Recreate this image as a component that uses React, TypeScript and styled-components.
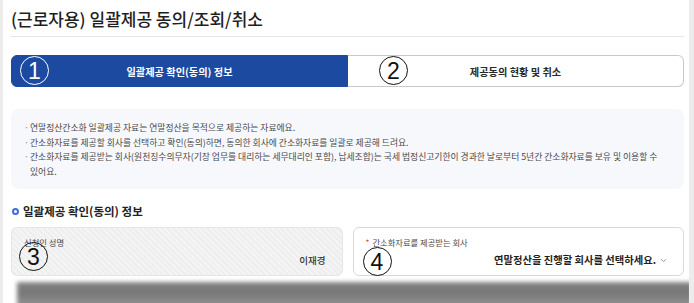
import React from 'react'
import styled, { createGlobalStyle } from 'styled-components'

const GlobalStyle = createGlobalStyle`
  html, body {
    margin: 0;
    padding: 0;
    background: #ececec;
  }
  body {
    font-family: 'Noto Sans CJK KR', 'Noto Sans', sans-serif;
    color: #222;
  }
`

const Page = styled.div`
  margin-left: 3px;
  width: 686px;
  height: 303px;
  overflow: hidden;
  background: #fff;
  box-sizing: border-box;
  padding: 0 5px 0 8px;
`

const Header = styled.header`
  padding-top: 6px;
  padding-bottom: 5px;
  border-bottom: 1px solid #e6e6e6;
`

const Title = styled.h1`
  margin: 0;
  font-size: 17px;
  line-height: 25px;
  font-weight: 500;
  color: #1f1f1f;
`

const Tabs = styled.div`
  display: grid;
  grid-template-columns: 337px 1fr;
  margin-top: 18px;
  height: 32px;
`

const Tab = styled.div<{ $active?: boolean }>`
  position: relative;
  display: flex;
  align-items: center;
  justify-content: center;
  font-size: 10.2px;
  font-weight: 700;
  box-sizing: border-box;
  background: ${ p => p.$active ? '#1d4aa1' : '#fff' };
  color: ${ p => p.$active ? '#fff' : '#2a2a2a' };
  border: 1px solid ${ p => p.$active ? '#1d4aa1' : '#c9c9c9' };
  border-left-width: ${ p => p.$active ? '1px' : '0' };
  border-radius: ${ p => p.$active ? '6px 0 0 6px' : '0 6px 6px 0' };
`

const Mark = styled.span<{ $light?: boolean; $x: number; $y: number }>`
  position: absolute;
  left: ${ p => p.$x }px;
  top: ${ p => p.$y }px;
  width: 29px;
  height: 29px;
  box-sizing: border-box;
  border-radius: 50%;
  border: 1.6px solid ${ p => p.$light ? '#fff' : '#111' };
  color: ${ p => p.$light ? '#fff' : '#111' };
  display: flex;
  align-items: center;
  justify-content: center;
  font-family: 'Liberation Sans', Arial, sans-serif;
  font-size: 23px;
  line-height: 1;
  font-weight: 400;
  padding-top: 1px;
`

const InfoBox = styled.ul`
  list-style: none;
  margin: 22px 0 0;
  padding: 12px 14px 10px 13px;
  background: #f7f8fc;
  border-radius: 8px;
  font-size: 8.8px;
  line-height: 14.5px;
  color: #4a4a4a;
`

const InfoItem = styled.li`
  position: relative;
  padding-left: 6px;
  white-space: nowrap;

  &::before {
    content: '·';
    position: absolute;
    left: 0;
    color: #888;
  }
`

const SectionTitle = styled.h2`
  display: flex;
  align-items: center;
  gap: 4px;
  margin: 14px 0 0 1px;
  font-size: 11.5px;
  line-height: 16px;
  font-weight: 700;
  color: #222;
`

const Ring = styled.span`
  width: 7px;
  height: 7px;
  box-sizing: border-box;
  border-radius: 50%;
  border: 2px solid #3f6fd8;
`

const Fields = styled.div`
  display: grid;
  grid-template-columns: 1fr 1fr;
  gap: 10px;
  margin-top: 8px;
`

const Field = styled.div<{ $disabled?: boolean }>`
  position: relative;
  height: 49px;
  box-sizing: border-box;
  padding: 8px 16px 0 12px;
  border-radius: 6px;
  border: 1px solid ${ p => p.$disabled ? '#e6e6e6' : '#d9d9d9' };
  background: ${ p => p.$disabled
    ? 'repeating-linear-gradient(45deg, #f4f4f4 0 2px, #eeeeee 2px 4px)'
    : '#fff' };
`

const Label = styled.div`
  font-size: 8.3px;
  line-height: 13px;
  color: #4a4a4a;
`

const Required = styled.span`
  color: #e0464b;
  margin-right: 3px;
`

const Value = styled.div<{ $strong?: boolean }>`
  display: flex;
  align-items: center;
  justify-content: flex-end;
  gap: 4px;
  margin-top: 3px;
  font-size: ${ p => p.$strong ? '10.3px' : '9.5px' };
  line-height: 16px;
  font-weight: ${ p => p.$strong ? 700 : 500 };
  color: ${ p => p.$strong ? '#1f1f1f' : '#333' };
`

const Shade = styled.div`
  margin: 6px -8px 0 6px;
  height: 30px;
  background: linear-gradient(#868686, #767676 35%, #a2a2a2);
  filter: blur(2px);
`

const Chevron = () => (
  <svg width="7" height="5" viewBox="0 0 7 5">
    <path d="M1 1.2 L3.5 3.6 L6 1.2" fill="none" stroke="#999" strokeWidth="1" />
  </svg>
)

export default function App() {
  return (
    <>
      <GlobalStyle />
      <Page>
        <Header>
          <Title>(근로자용) 일괄제공 동의/조회/취소</Title>
        </Header>

        <Tabs>
          <Tab $active>
            <Mark $light $x={ 8 } $y={ 0 }>1</Mark>
            일괄제공 확인(동의) 정보
          </Tab>
          <Tab>
            <Mark $x={ 31 } $y={ 0 }>2</Mark>
            제공동의 현황 및 취소
          </Tab>
        </Tabs>

        <InfoBox>
          <InfoItem>연말정산간소화 일괄제공 자료는 연말정산을 목적으로 제공하는 자료에요.</InfoItem>
          <InfoItem>간소화자료를 제공할 회사를 선택하고 확인(동의)하면, 동의한 회사에 간소화자료를 일괄로 제공해 드려요.</InfoItem>
          <InfoItem>
            간소화자료를 제공받는 회사(원천징수의무자(기장 업무를 대리하는 세무대리인 포함), 납세조합)는 국세 법정신고기한이 경과한 날로부터 5년간 간소화자료를 보유 및 이용할 수
            <br />
            있어요.
          </InfoItem>
        </InfoBox>

        <SectionTitle>
          <Ring />
          일괄제공 확인(동의) 정보
        </SectionTitle>

        <Fields>
          <Field $disabled>
            <Mark $x={ 7 } $y={ 14 }>3</Mark>
            <Label>신청인 성명</Label>
            <Value>이재경</Value>
          </Field>
          <Field>
            <Mark $x={ 9 } $y={ 19 }>4</Mark>
            <Label><Required>*</Required>간소화자료를 제공받는 회사</Label>
            <Value $strong>
              연말정산을 진행할 회사를 선택하세요.
              <Chevron />
            </Value>
          </Field>
        </Fields>

        <Shade />
      </Page>
    </>
  )
}
